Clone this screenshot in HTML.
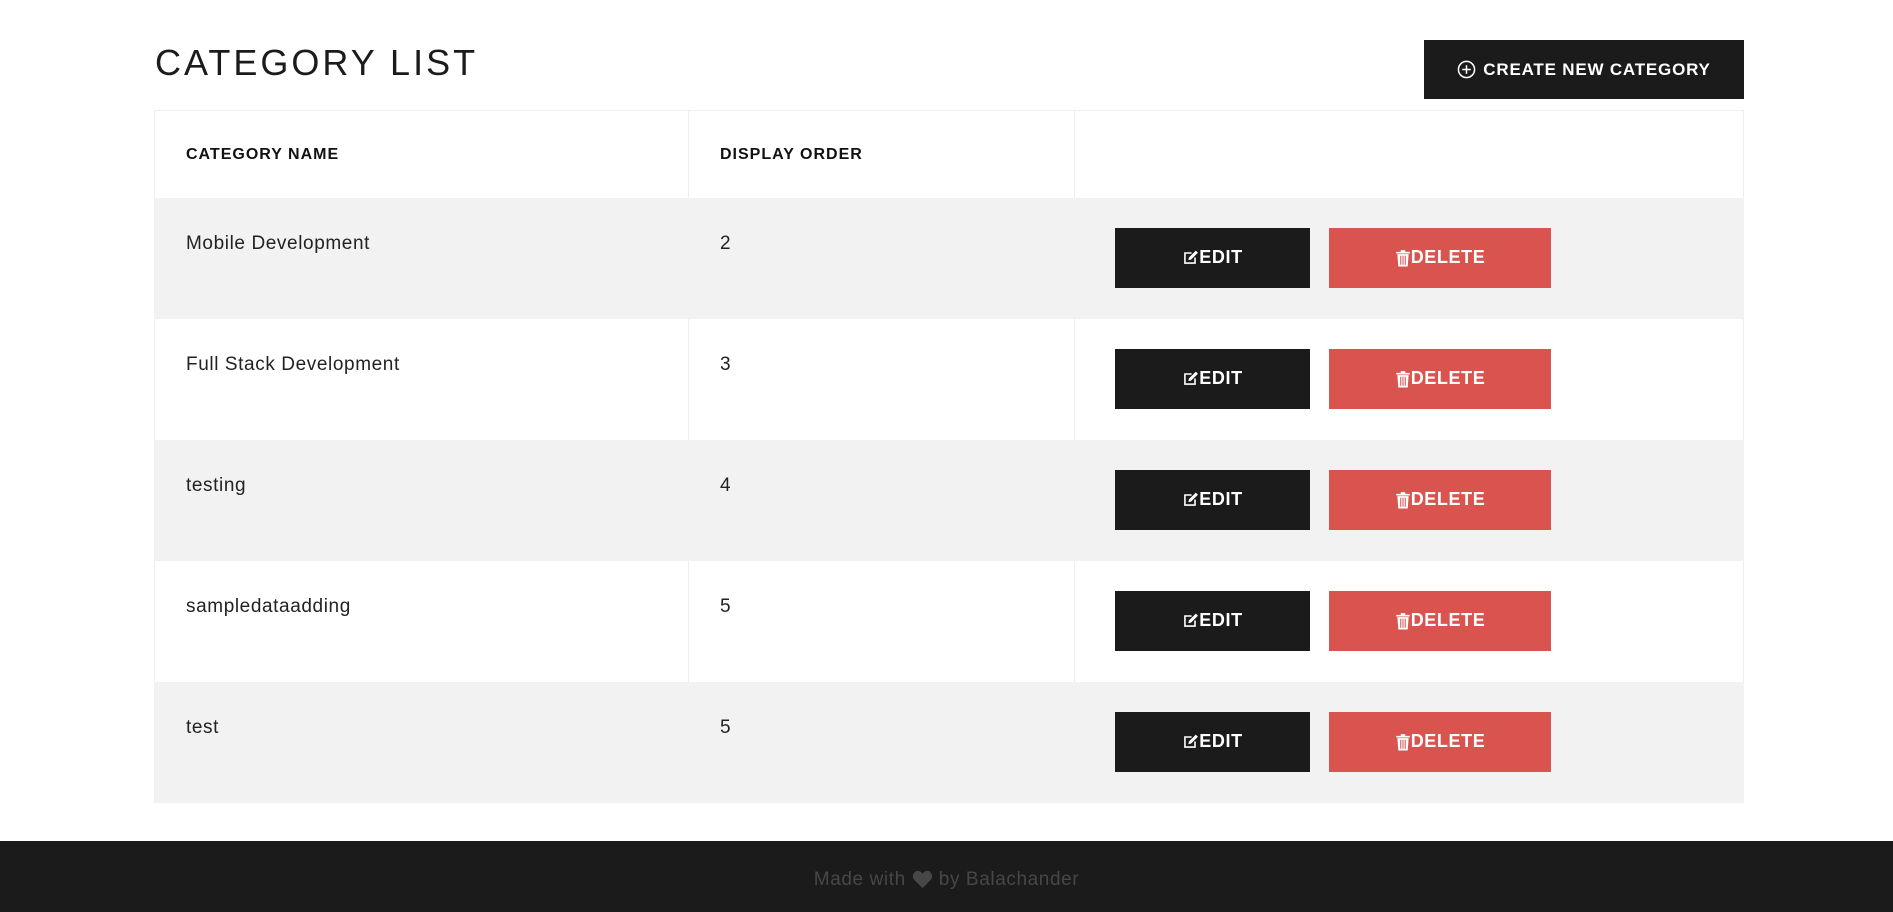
<!DOCTYPE html>
<html><head><meta charset="utf-8"><style>
*{margin:0;padding:0;box-sizing:border-box}
body{width:1893px;height:912px;background:#fff;font-family:"Liberation Sans",sans-serif;position:relative;overflow:hidden;color:#222}
h1{position:absolute;left:155px;top:42px;font-size:36px;font-weight:normal;letter-spacing:3px;color:#1b1b1b;line-height:42px}
.create{position:absolute;left:1424px;top:40px;width:320px;height:59px;background:#1b1b1b;color:#fff;font-size:17px;font-weight:bold;letter-spacing:0.8px;display:flex;align-items:center;justify-content:center;gap:7px}
table{position:absolute;left:154px;top:110px;width:1590px;border-collapse:collapse}
td,th{border-left:1px solid #eee;border-right:1px solid #eee;text-align:left;vertical-align:top}
th{height:87px;font-size:16px;font-weight:bold;letter-spacing:1px;padding:35px 0 0 31px;color:#111;border-top:1px solid #eee}
td{height:121px;font-size:19px;letter-spacing:0.6px;padding:35px 0 0 31px;color:#222}
tr.g td{background:#f2f2f2;border-color:#f2f2f2}
td.a{padding:30px 0 0 40px}
.btn{display:inline-flex;align-items:center;justify-content:center;height:60px;color:#fff;font-size:18px;font-weight:bold;letter-spacing:0.6px;vertical-align:top}
.e{width:195px;background:#1b1b1b}
.d{width:222px;background:#d9534f;margin-left:19px}
footer{position:absolute;left:0;top:841px;width:1893px;height:71px;background:#1b1b1b;color:#474747;font-size:19px;letter-spacing:0.6px;display:flex;align-items:center;justify-content:center;gap:6px;padding-top:6px}
</style></head><body>
<h1>CATEGORY LIST</h1>
<div class="create"><svg width="19" height="19" viewBox="0 0 20 20"><circle cx="10" cy="10" r="8.5" fill="none" stroke="#fff" stroke-width="1.6"/><path d="M10 5.5v9M5.5 10h9" stroke="#fff" stroke-width="1.6"/></svg>CREATE NEW CATEGORY</div>
<table>
<tr><th style="width:534px">CATEGORY NAME</th><th style="width:386px">DISPLAY ORDER</th><th></th></tr>
<tr class="g"><td>Mobile Development</td><td>2</td><td class="a"><span class="btn e"><svg width="17" height="17" viewBox="0 0 16 16"><path d="M2 3h7v1.5H3.5v8h8V8H13v6H2z" fill="#fff"/><path d="M13 1.5l2 2-6.5 6.5-2.5.5.5-2.5z" fill="#fff"/></svg>EDIT</span><span class="btn d"><svg width="16" height="18" viewBox="0 0 14 16"><path d="M1 2.5h12v1.5H1zM5 1h4v1.5H5zM2 4.5h10l-.8 11H2.8z" fill="#fff"/><path d="M5 6v8M7 6v8M9 6v8" stroke="#d9534f" stroke-width=".9"/></svg>DELETE</span></td></tr>
<tr><td>Full Stack Development</td><td>3</td><td class="a"><span class="btn e"><svg width="17" height="17" viewBox="0 0 16 16"><path d="M2 3h7v1.5H3.5v8h8V8H13v6H2z" fill="#fff"/><path d="M13 1.5l2 2-6.5 6.5-2.5.5.5-2.5z" fill="#fff"/></svg>EDIT</span><span class="btn d"><svg width="16" height="18" viewBox="0 0 14 16"><path d="M1 2.5h12v1.5H1zM5 1h4v1.5H5zM2 4.5h10l-.8 11H2.8z" fill="#fff"/><path d="M5 6v8M7 6v8M9 6v8" stroke="#d9534f" stroke-width=".9"/></svg>DELETE</span></td></tr>
<tr class="g"><td>testing</td><td>4</td><td class="a"><span class="btn e"><svg width="17" height="17" viewBox="0 0 16 16"><path d="M2 3h7v1.5H3.5v8h8V8H13v6H2z" fill="#fff"/><path d="M13 1.5l2 2-6.5 6.5-2.5.5.5-2.5z" fill="#fff"/></svg>EDIT</span><span class="btn d"><svg width="16" height="18" viewBox="0 0 14 16"><path d="M1 2.5h12v1.5H1zM5 1h4v1.5H5zM2 4.5h10l-.8 11H2.8z" fill="#fff"/><path d="M5 6v8M7 6v8M9 6v8" stroke="#d9534f" stroke-width=".9"/></svg>DELETE</span></td></tr>
<tr><td>sampledataadding</td><td>5</td><td class="a"><span class="btn e"><svg width="17" height="17" viewBox="0 0 16 16"><path d="M2 3h7v1.5H3.5v8h8V8H13v6H2z" fill="#fff"/><path d="M13 1.5l2 2-6.5 6.5-2.5.5.5-2.5z" fill="#fff"/></svg>EDIT</span><span class="btn d"><svg width="16" height="18" viewBox="0 0 14 16"><path d="M1 2.5h12v1.5H1zM5 1h4v1.5H5zM2 4.5h10l-.8 11H2.8z" fill="#fff"/><path d="M5 6v8M7 6v8M9 6v8" stroke="#d9534f" stroke-width=".9"/></svg>DELETE</span></td></tr>
<tr class="g"><td>test</td><td>5</td><td class="a"><span class="btn e"><svg width="17" height="17" viewBox="0 0 16 16"><path d="M2 3h7v1.5H3.5v8h8V8H13v6H2z" fill="#fff"/><path d="M13 1.5l2 2-6.5 6.5-2.5.5.5-2.5z" fill="#fff"/></svg>EDIT</span><span class="btn d"><svg width="16" height="18" viewBox="0 0 14 16"><path d="M1 2.5h12v1.5H1zM5 1h4v1.5H5zM2 4.5h10l-.8 11H2.8z" fill="#fff"/><path d="M5 6v8M7 6v8M9 6v8" stroke="#d9534f" stroke-width=".9"/></svg>DELETE</span></td></tr>
</table>
<footer>Made with <svg width="21" height="19" viewBox="0 0 24 22"><path d="M12 21L2.5 11.5C-1 8 1.5 1 6.5 1 9 1 11 2.5 12 4.5 13 2.5 15 1 17.5 1c5 0 7.5 7 4 10.5z" fill="#474747"/></svg> by Balachander</footer>
</body></html>
